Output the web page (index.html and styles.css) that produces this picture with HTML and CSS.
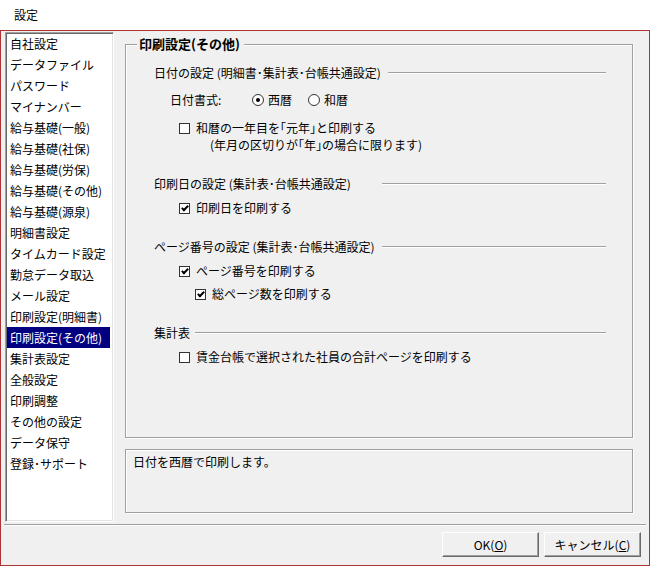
FILE: index.html
```html
<!DOCTYPE html>
<html>
  <head>
    <title>設定</title>
    <meta charset="utf-8" />
    <link rel="stylesheet" href="styles.css">
  </head>
  <body>
    <div class="window">
      <div class="titlebar">設定</div>
      <div class="client">
        <div class="main">
          <ul class="menu">
            <li>自社設定</li>
            <li>データファイル</li>
            <li>パスワード</li>
            <li>マイナンバー</li>
            <li>給与基礎(一般)</li>
            <li>給与基礎(社保)</li>
            <li>給与基礎(労保)</li>
            <li>給与基礎(その他)</li>
            <li>給与基礎(源泉)</li>
            <li>明細書設定</li>
            <li>タイムカード設定</li>
            <li>勤怠データ取込</li>
            <li>メール設定</li>
            <li>印刷設定(明細書)</li>
            <li class="selected">印刷設定(その他)</li>
            <li>集計表設定</li>
            <li>全般設定</li>
            <li>印刷調整</li>
            <li>その他の設定</li>
            <li>データ保守</li>
            <li>登録･サポート</li>
          </ul>
          <div class="panel">
            <div class="group">
              <div class="group-title">印刷設定(その他)</div>

              <div class="sec">
                <div class="heading">
                  <span class="label w-date">日付の設定 (明細書･集計表･台帳共通設定)</span>
                  <span class="rule"></span>
                </div>
                <div class="row fmt">
                  <span class="fmt-label">日付書式:</span>
                  <span class="opt"><span class="dot on"></span>西暦</span>
                  <span class="opt"><span class="dot"></span>和暦</span>
                </div>
                <div class="row check wareki">
                  <span class="box"></span>和暦の一年目を｢元年｣と印刷する
                </div>
                <div class="row note">(年月の区切りが｢年｣の場合に限ります)</div>
              </div>

              <div class="sec">
                <div class="heading">
                  <span class="label w-print">印刷日の設定 (集計表･台帳共通設定)</span>
                  <span class="rule"></span>
                </div>
                <div class="row check">
                  <span class="box on"></span>印刷日を印刷する
                </div>
              </div>

              <div class="sec">
                <div class="heading">
                  <span class="label w-print">ページ番号の設定 (集計表･台帳共通設定)</span>
                  <span class="rule"></span>
                </div>
                <div class="row check">
                  <span class="box on"></span>ページ番号を印刷する
                </div>
                <div class="row check sub">
                  <span class="box on"></span>総ページ数を印刷する
                </div>
              </div>

              <div class="sec">
                <div class="heading">
                  <span class="label w-total">集計表</span>
                  <span class="rule"></span>
                </div>
                <div class="row check">
                  <span class="box"></span>賃金台帳で選択された社員の合計ページを印刷する
                </div>
              </div>
            </div>
            <div class="desc">日付を西暦で印刷します。</div>
          </div>
        </div>
        <div class="sep"></div>
        <div class="buttons">
          <button class="btn" type="button">OK(<u>O</u>)</button>
          <button class="btn" type="button">キャンセル(<u>C</u>)</button>
        </div>
      </div>
    </div>
  </body>
</html>
```

FILE: styles.css
```css
body {
  margin: 0;
  background: #fff;
  color: #000;
  font: 12px/16px "Noto Sans CJK JP", "Noto Sans", sans-serif;
}
.window {
  width: 650px;
  height: 567px;
}
.titlebar {
  height: 30px;
  line-height: 30px;
  padding-left: 14px;
  box-sizing: border-box;
}
.client {
  height: 536px;
  box-sizing: border-box;
  border: 1px solid #ad3434;
  background: #f0f0f0;
}
.main {
  display: flex;
  height: 491px;
  padding: 1px 0 0 4px;
}

/* left menu */
.menu {
  list-style: none;
  margin: 0;
  padding: 0 3px 0 1px;
  width: 109px;
  height: 490px;
  box-sizing: border-box;
  background: #fff;
  border: 1px solid;
  border-color: #a0a0a0 #fff #fff #a0a0a0;
  box-shadow: inset 1px 1px 0 #696969, inset -1px -1px 0 #e3e3e3;
}
.menu li {
  height: 21px;
  line-height: 21px;
  padding-left: 3px;
  white-space: nowrap;
}
.menu .selected {
  background: #000080;
  color: #fff;
}

/* right panel */
.panel {
  margin-left: 11px;
  width: 508px;
}
.group {
  margin-top: 12px;
  height: 394px;
  box-sizing: border-box;
  border: 1px solid #a0a0a0;
  box-shadow: inset 1px 1px 0 #fff, 1px 1px 0 #fff;
  padding: 0 26px 0 28px;
}
.group-title {
  width: fit-content;
  margin: -9px 0 0 -17px;
  padding: 0 4px 0 2px;
  background: #f0f0f0;
  font-size: 13px;
  font-weight: bold;
}
.sec {
  margin-top: 23px;
}
.group-title + .sec {
  margin-top: 13px;
}
.heading {
  display: flex;
  align-items: center;
  height: 16px;
}
.label {
  flex: none;
  white-space: nowrap;
}
.w-date {
  width: 234px;
}
.w-print {
  width: 228px;
}
.w-total {
  width: 41px;
}
.rule {
  flex: 1;
  border-top: 1px solid #a0a0a0;
  border-bottom: 1px solid #fff;
}
.row {
  display: flex;
  align-items: center;
  height: 16px;
  white-space: nowrap;
}
.fmt {
  margin-top: 11px;
  padding-left: 16px;
}
.fmt-label {
  width: 82px;
}
.opt {
  display: flex;
  align-items: center;
  gap: 4px;
}
.opt + .opt {
  margin-left: 16px;
}
.dot {
  width: 12px;
  height: 12px;
  box-sizing: border-box;
  border: 1px solid #333;
  border-radius: 50%;
  background: #fff;
  display: flex;
  align-items: center;
  justify-content: center;
}
.dot.on::after {
  content: "";
  width: 4px;
  height: 4px;
  border-radius: 50%;
  background: #000;
}
.check {
  margin-top: 8px;
  padding-left: 25px;
  gap: 6px;
}
.check.wareki {
  margin-top: 12px;
}
.check.sub {
  margin-top: 7px;
  padding-left: 41px;
}
.note {
  margin-top: 1px;
  padding-left: 56px;
}
.box {
  width: 11px;
  height: 11px;
  box-sizing: border-box;
  border: 1px solid #333;
  background: #fff;
  display: flex;
  align-items: center;
  justify-content: center;
}
.box.on::after {
  content: "";
  width: 2px;
  height: 5px;
  border: solid #000;
  border-width: 0 2px 2px 0;
  transform: translateY(-1px) rotate(45deg);
}
.desc {
  margin-top: 11px;
  height: 64px;
  box-sizing: border-box;
  border: 1px solid #a0a0a0;
  box-shadow: inset 1px 1px 0 #fff, 1px 1px 0 #fff;
  padding: 4px 7px;
}

/* bottom bar */
.sep {
  margin: 1px 0 0 3px;
  width: 642px;
  border-top: 1px solid #a0a0a0;
  border-bottom: 1px solid #fff;
}
.buttons {
  display: flex;
  justify-content: flex-end;
  gap: 5px;
  margin-top: 6px;
  padding-right: 8px;
}
.btn {
  width: 97px;
  height: 25px;
  box-sizing: border-box;
  padding: 0;
  background: #f0f0f0;
  border: 1px solid;
  border-color: #fff #696969 #696969 #fff;
  box-shadow: inset -1px -1px 0 #a0a0a0;
  font: inherit;
  color: #000;
}
```
